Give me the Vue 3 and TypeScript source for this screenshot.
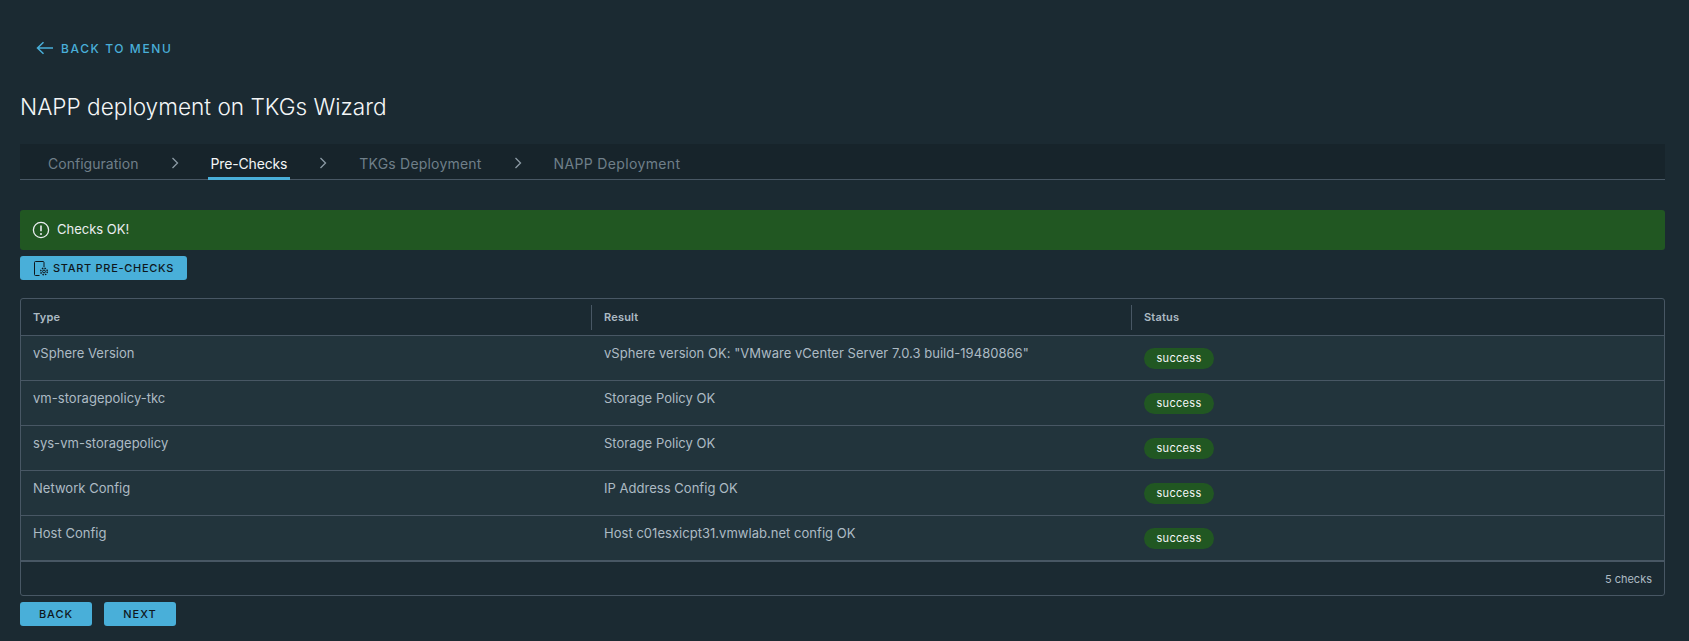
<script setup lang="ts">
interface Check { type: string; result: string }
const steps = ['Configuration', 'Pre-Checks', 'TKGs Deployment', 'NAPP Deployment']
const checks: Check[] = [
  { type: 'vSphere Version', result: 'vSphere version OK: "VMware vCenter Server 7.0.3 build-19480866"' },
  { type: 'vm-storagepolicy-tkc', result: 'Storage Policy OK' },
  { type: 'sys-vm-storagepolicy', result: 'Storage Policy OK' },
  { type: 'Network Config', result: 'IP Address Config OK' },
  { type: 'Host Config', result: 'Host c01esxicpt31.vmwlab.net config OK' },
]
</script>

<template>
  <div class="page">
    <a class="back-link">
      <svg class="back-icon" viewBox="0 0 18 14" width="18" height="14" fill="none" stroke="currentColor" stroke-width="1.5">
        <path d="M1.5 7h15.5M7.5 1.2 1.5 7l6 5.8" />
      </svg>
      BACK TO MENU
    </a>
    <h1 class="title">NAPP deployment on TKGs Wizard</h1>

    <nav class="tabs">
      <template v-for="(s, i) in steps" :key="s">
        <span class="tab" :class="{ active: i === 1, first: i === 0, last: i === 3 }">{{ s }}</span>
        <svg v-if="i < steps.length - 1" class="chev" viewBox="0 0 8 14" width="8" height="14" fill="none" stroke="currentColor" stroke-width="1.3">
          <path d="M1.5 2l5 5-5 5" />
        </svg>
      </template>
    </nav>

    <div class="alert">
      <svg viewBox="0 0 18 18" width="18" height="18" fill="none" stroke="currentColor" stroke-width="1.3">
        <circle cx="9" cy="9" r="7.6" />
        <path d="M9 4.6v5.6" stroke-width="1.6" />
        <circle cx="9" cy="13" r="1" fill="currentColor" stroke="none" />
      </svg>
      <span>Checks OK!</span>
    </div>

    <button class="btn start">
      <svg viewBox="0 0 16 16" width="16" height="16" fill="none" stroke="currentColor" stroke-width="1">
        <path d="M6.5 15.5H2.5a1 1 0 0 1-1-1v-12a1 1 0 0 1 1-1h7.5a1 1 0 0 1 1 1V7" />
        <circle cx="11" cy="11.5" r="1.4" />
        <circle cx="11" cy="11.5" r="3.3" stroke-dasharray="1.5 1.1" stroke-width="1.4" />
      </svg>
      START PRE-CHECKS
    </button>

    <div class="grid">
      <div class="row head">
        <div class="cell">Type</div>
        <div class="cell sep">Result</div>
        <div class="cell sep">Status</div>
      </div>
      <div v-for="c in checks" :key="c.type" class="row body">
        <div class="cell">{{ c.type }}</div>
        <div class="cell">{{ c.result }}</div>
        <div class="cell"><span class="badge">success</span></div>
      </div>
      <div class="foot">5 checks</div>
    </div>

    <div class="actions">
      <button class="btn wide">BACK</button>
      <button class="btn wide">NEXT</button>
    </div>
  </div>
</template>

<style>
html, body { margin: 0; background: #1b2a32; }
</style>

<style scoped>
.page {
  box-sizing: border-box;
  height: 641px;
  padding: 0 24px 0 20px;
  background: #1b2a32;
  font-family: Inter, "Noto Sans", sans-serif;
  color: #adbbc4;
  overflow: hidden;
}
.back-link {
  display: flex;
  align-items: center;
  gap: 7px;
  margin-left: 16px;
  padding-top: 40px;
  height: 16px;
  color: #49afd9;
  font-size: 12px;
  font-weight: 500;
  letter-spacing: 1.6px;
}
.title {
  margin: 35px 0 0;
  height: 32px;
  line-height: 32px;
  font-size: 22.6px;
  font-weight: 300;
  color: #f4f6f7;
}
.tabs {
  display: flex;
  align-items: stretch;
  height: 35px;
  margin-top: 21px;
  padding-left: 28px;
  background: #17242b;
  border-bottom: 1px solid #485764;
  font-size: 14px;
  letter-spacing: 0.2px;
}
.tab {
  display: flex;
  align-items: center;
  padding-top: 4px;
  box-sizing: border-box;
  color: #6f7f89;
}
.tab.first { letter-spacing: 0.03px; }
.tab.last { letter-spacing: 0.35px; }
.tab.active {
  color: #f4f6f7;
  margin: 0 -3px -1px;
  padding: 6px 3px 0;
  border-bottom: 3px solid #49afd9;
  letter-spacing: -0.15px;
}
.chev {
  align-self: center;
  margin: 2px 32px 0;
  color: #8c9ba5;
}
.alert {
  display: flex;
  align-items: center;
  gap: 7px;
  height: 40px;
  margin-top: 30px;
  padding-left: 12px;
  border-radius: 3px;
  background: #215722;
  color: #eaedf0;
  font-size: 13px;
}
.alert span { margin-top: -2px; }
.btn {
  border: 0;
  border-radius: 3px;
  background: #49afd9;
  color: #0f171c;
  font-family: inherit;
  font-size: 11px;
  font-weight: 500;
  letter-spacing: 0.7px;
  height: 24px;
  padding: 0;
}
.start {
  display: flex;
  align-items: center;
  gap: 4px;
  width: 167px;
  margin-top: 6px;
  padding-left: 13px;
  box-sizing: border-box;
}
.grid {
  margin-top: 18px;
  border: 1px solid #485764;
  border-radius: 3px;
  box-sizing: border-box;
  height: 298px;
}
.row {
  display: grid;
  grid-template-columns: 571px 540px 1fr;
  border-bottom: 1px solid #485764;
  box-sizing: border-box;
}
.head {
  height: 37px;
  font-size: 11px;
  font-weight: 600;
  letter-spacing: 0.2px;
  align-items: center;
}
.sep { height: 25px; border-left: 1px solid #485764; margin-left: -1px; }
.body {
  height: 45px;
  background: #22343c;
  font-size: 13px;
  letter-spacing: 0.03px;
}
.body:nth-child(6) { border-bottom-width: 2px; height: 46px; }
.cell {
  padding: 9px 12px 0;
}
.head .cell { padding: 0 12px; line-height: 25px; }
.badge {
  display: inline-block;
  width: 70px;
  height: 21px;
  margin-top: 3px;
  border-radius: 11px;
  background: #215722;
  color: #f4f6f7;
  font-size: 11px;
  font-weight: 400;
  letter-spacing: 0.3px;
  line-height: 21px;
  text-align: center;
}
.foot {
  height: 34px;
  line-height: 34px;
  padding-right: 12px;
  text-align: right;
  font-size: 11px;
}
.actions {
  display: flex;
  gap: 12px;
  margin-top: 6px;
}
.wide { width: 72px; letter-spacing: 1px; }
</style>
